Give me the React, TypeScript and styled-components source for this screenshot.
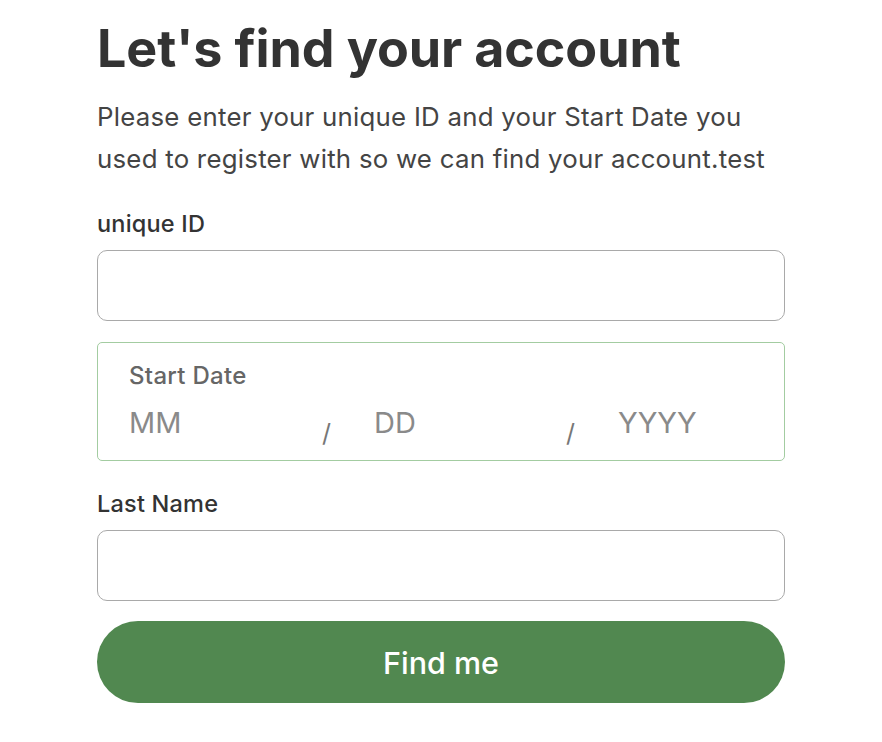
import React from "react";
import styled, { createGlobalStyle } from "styled-components";

const GlobalStyle = createGlobalStyle`
  html, body {
    margin: 0;
    padding: 0;
    background: #ffffff;
  }
  body {
    font-family: Inter, "Noto Sans", "Liberation Sans", sans-serif;
    color: #333333;
  }
`;

const Page = styled.main`
  width: 688px;
  padding: 18px 0 0 97px;
  display: flex;
  flex-direction: column;
`;

const Title = styled.h1`
  margin: 0;
  font-size: 52px;
  line-height: 62px;
  font-weight: 700;
  letter-spacing: -0.1px;
  color: #333333;
`;

const Intro = styled.p`
  margin: 16px 0 0;
  font-size: 25.8px;
  line-height: 42px;
  font-weight: 400;
  letter-spacing: 0.25px;
  color: #444444;
`;

const Form = styled.form`
  display: flex;
  flex-direction: column;
  margin-top: 30px;
`;

const Label = styled.label`
  font-size: 23.5px;
  line-height: 28px;
  font-weight: 500;
  letter-spacing: 0.2px;
  color: #333333;
  margin-bottom: 12px;
`;

const TextInput = styled.input`
  box-sizing: border-box;
  height: 71px;
  width: 100%;
  border: 1.5px solid #a9a9a9;
  border-radius: 10px;
  padding: 0 20px;
  font: inherit;
  font-size: 22px;
  outline: none;
  background: #fff;
`;

const DateBox = styled.fieldset`
  box-sizing: border-box;
  margin: 21px 0 29px;
  height: 119px;
  border: 1.5px solid #a3cca1;
  border-radius: 5px;
  padding: 19px 31px 0;
  display: flex;
  flex-direction: column;
`;

const DateLegend = styled.span`
  font-size: 24px;
  line-height: 28px;
  font-weight: 500;
  letter-spacing: 0.3px;
  color: #666666;
`;

const DateRow = styled.div`
  display: flex;
  align-items: flex-start;
  margin-top: 14px;
`;

const Segment = styled.input<{ $w: number }>`
  box-sizing: border-box;
  width: ${(p) => p.$w}px;
  height: 36px;
  border: none;
  padding: 0;
  font: inherit;
  font-size: 29px;
  color: #333;
  outline: none;
  background: transparent;
  &::placeholder {
    color: #8a8a8a;
  }
`;

const Slash = styled.span`
  font-size: 25px;
  line-height: 26px;
  color: #777777;
  padding-top: 16px;
  width: 52px;
  flex: none;
`;

const Button = styled.button`
  margin-top: 20px;
  height: 82px;
  width: 100%;
  border: none;
  border-radius: 41px;
  background: #518850;
  color: #ffffff;
  font: inherit;
  font-size: 30.5px;
  font-weight: 500;
  cursor: pointer;
`;

export default function App() {
  return (
    <>
      <GlobalStyle />
      <Page>
        <Title>Let's find your account</Title>
        <Intro>
          Please enter your unique ID and your Start Date you used to register with so we can find your
          account.test
        </Intro>
        <Form onSubmit={(e) => e.preventDefault()}>
          <Label htmlFor="uid">unique ID</Label>
          <TextInput id="uid" type="text" />
          <DateBox>
            <DateLegend>Start Date</DateLegend>
            <DateRow>
              <Segment $w={193} placeholder="MM" />
              <Slash>/</Slash>
              <Segment $w={192} placeholder="DD" />
              <Slash>/</Slash>
              <Segment $w={120} placeholder="YYYY" />
            </DateRow>
          </DateBox>
          <Label htmlFor="lname">Last Name</Label>
          <TextInput id="lname" type="text" />
          <Button type="submit">Find me</Button>
        </Form>
      </Page>
    </>
  );
}
